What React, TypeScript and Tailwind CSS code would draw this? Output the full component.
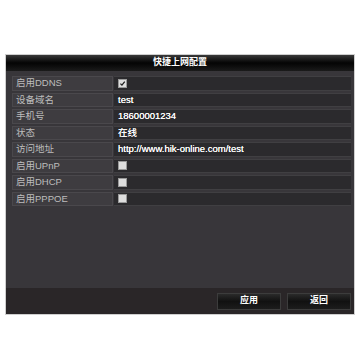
import type { ReactNode } from 'react'

const font = { fontFamily: '"Liberation Sans", Arial, "Noto Sans CJK SC", sans-serif' }

type Row = { label: string; value?: string; check?: boolean }

const rows: Row[] = [
  { label: '启用DDNS', check: true },
  { label: '设备域名', value: 'test' },
  { label: '手机号', value: '18600001234' },
  { label: '状态', value: '在线' },
  { label: '访问地址', value: 'http://www.hik-online.com/test' },
  { label: '启用UPnP', check: false },
  { label: '启用DHCP', check: false },
  { label: '启用PPPOE', check: false },
]

function Checkbox({ checked }: { readonly checked: boolean }) {
  return (
    <span className="flex h-[9px] w-[9px] items-center justify-center border border-[#9a9a9a] bg-[#dedede]">
      {checked ? (
        <svg viewBox="0 0 10 10" className="h-[7px] w-[7px]" aria-hidden="true">
          <path d="M2 5.2 L4.2 7.4 L8.2 2.4" fill="none" stroke="#1c1c1c" strokeWidth="1.8" />
        </svg>
      ) : null}
    </span>
  )
}

function Button({ children }: { readonly children: ReactNode }) {
  return (
    <button
      type="button"
      className="flex h-[17px] w-[64px] items-center justify-center border border-[#3c3c3c] bg-gradient-to-b from-[#2a2a2a] via-[#111] to-[#1c1c1c] text-[9px] font-bold text-white"
    >
      {children}
    </button>
  )
}

export default function App() {
  return (
    <div className="h-[340px] w-[360px] bg-white px-[5px] pt-[54px]" style={font}>
      <div className="h-[261px] w-[350px] border border-[#cfcfcf]">
        <div className="flex h-full flex-col bg-[#38363a]">
          <div className="flex h-[16px] items-center justify-center bg-gradient-to-b from-[#3a3a3a] via-[#050505] to-[#1b1b1b] text-[9px] font-bold text-white">
            快捷上网配置
          </div>
          <div className="flex flex-1 flex-col gap-[2px] pl-[6px] pr-[3px] pt-[5px]">
            {rows.map((r) => (
              <div key={r.label} className="flex h-[14.5px] gap-px">
                <div className="flex w-[101px] items-center border border-[#4a484c] bg-[#3e3c40] pl-[3px] text-[9.5px] text-[#bdbdbd]">
                  {r.label}
                </div>
                <div className="flex flex-1 items-center border-y border-[#403f42] bg-[#2b2a2d] pl-[4px] text-[9.5px] text-white [text-shadow:0_0_0.4px_#fff]">
                  {r.check !== undefined ? <Checkbox checked={r.check} /> : r.value}
                </div>
              </div>
            ))}
          </div>
          <div className="flex h-[26px] items-center justify-end gap-[6px] bg-[#2a2628] pr-[3px]">
            <Button>应用</Button>
            <Button>返回</Button>
          </div>
        </div>
      </div>
    </div>
  )
}
